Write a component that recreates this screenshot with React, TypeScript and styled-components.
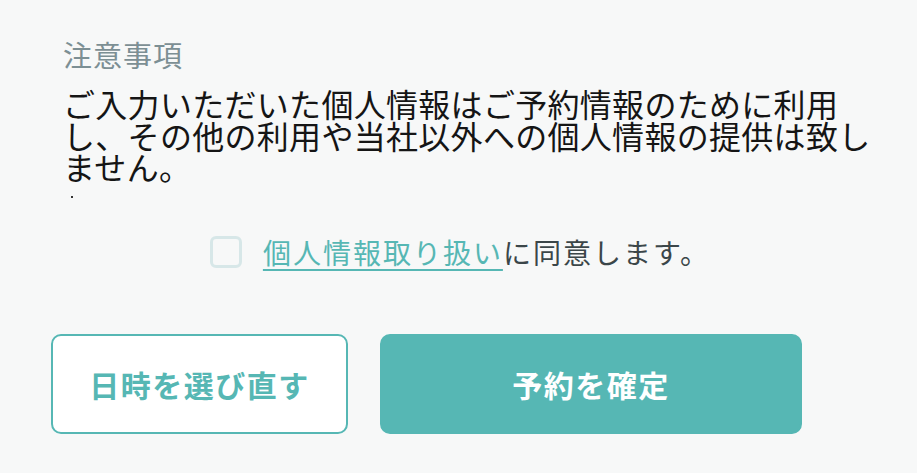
import React, { useState } from 'react';
import styled, { createGlobalStyle } from 'styled-components';

const GlobalStyle = createGlobalStyle`
  html, body {
    margin: 0;
    padding: 0;
    background: #f7f8f8;
  }
  body {
    font-family: "Noto Sans CJK JP", "Noto Sans", sans-serif;
    color: #1a1a1a;
  }
`;

const teal = '#56b7b4';

const Page = styled.div`
  width: 917px;
  height: 473px;
  box-sizing: border-box;
  padding: 38px 0 0 51px;
  overflow: hidden;
`;

const Notes = styled.section`
  padding-left: 12px;
  width: 820px;
`;

const NoteTitle = styled.h2`
  margin: 0;
  font-size: 29px;
  font-weight: 400;
  line-height: 32px;
  letter-spacing: 1px;
  color: #7c8f94;
`;

const NoteBody = styled.p`
  margin: 18px 0 0;
  font-size: 32px;
  line-height: 31.5px;
  letter-spacing: 0.3px;
  color: #151515;
`;

const Speck = styled.span`
  display: block;
  width: 2px;
  height: 2px;
  margin: 13px 0 0 8px;
  background: #333;
`;

const AgreeRow = styled.label`
  width: 818px;
  margin-top: 38px;
  display: flex;
  align-items: center;
  justify-content: center;
  gap: 21px;
  cursor: pointer;
`;

const Box = styled.span<{ $checked: boolean }>`
  width: 32px;
  height: 32px;
  box-sizing: border-box;
  border: 3px solid #d7e7e8;
  border-radius: 6px;
  background: ${(p) => (p.$checked ? teal : 'transparent')};
  flex: none;
`;

const AgreeText = styled.span`
  font-size: 28px;
  line-height: 32px;
  letter-spacing: 2px;
  color: #3b4649;
`;

const Link = styled.a`
  color: ${teal};
  text-decoration: underline;
  text-decoration-thickness: 2px;
  text-underline-offset: 5px;
`;

const Actions = styled.div`
  margin-top: 66px;
  display: grid;
  grid-template-columns: 297px 422px;
  gap: 32px;
`;

const Button = styled.button<{ $primary?: boolean }>`
  height: 100px;
  box-sizing: border-box;
  border-radius: 10px;
  border: 2px solid ${teal};
  background: ${(p) => (p.$primary ? teal : '#fff')};
  color: ${(p) => (p.$primary ? '#fff' : teal)};
  font-family: "Noto Sans CJK JP", "Noto Sans", sans-serif;
  font-size: 30px;
  font-weight: 700;
  letter-spacing: 1.5px;
  cursor: pointer;
`;

export default function App() {
  const [agreed, setAgreed] = useState(false);

  return (
    <Page>
      <GlobalStyle />
      <Notes>
        <NoteTitle>注意事項</NoteTitle>
        <NoteBody>
          ご入力いただいた個人情報はご予約情報のために利用し、その他の利用や当社以外への個人情報の提供は致しません。
        </NoteBody>
        <Speck />
      </Notes>
      <AgreeRow onClick={() => setAgreed(!agreed)}>
        <Box $checked={agreed} />
        <AgreeText>
          <Link href="#" onClick={(e) => e.preventDefault()}>
            個人情報取り扱い
          </Link>
          に同意します。
        </AgreeText>
      </AgreeRow>
      <Actions>
        <Button>日時を選び直す</Button>
        <Button $primary>予約を確定</Button>
      </Actions>
    </Page>
  );
}
